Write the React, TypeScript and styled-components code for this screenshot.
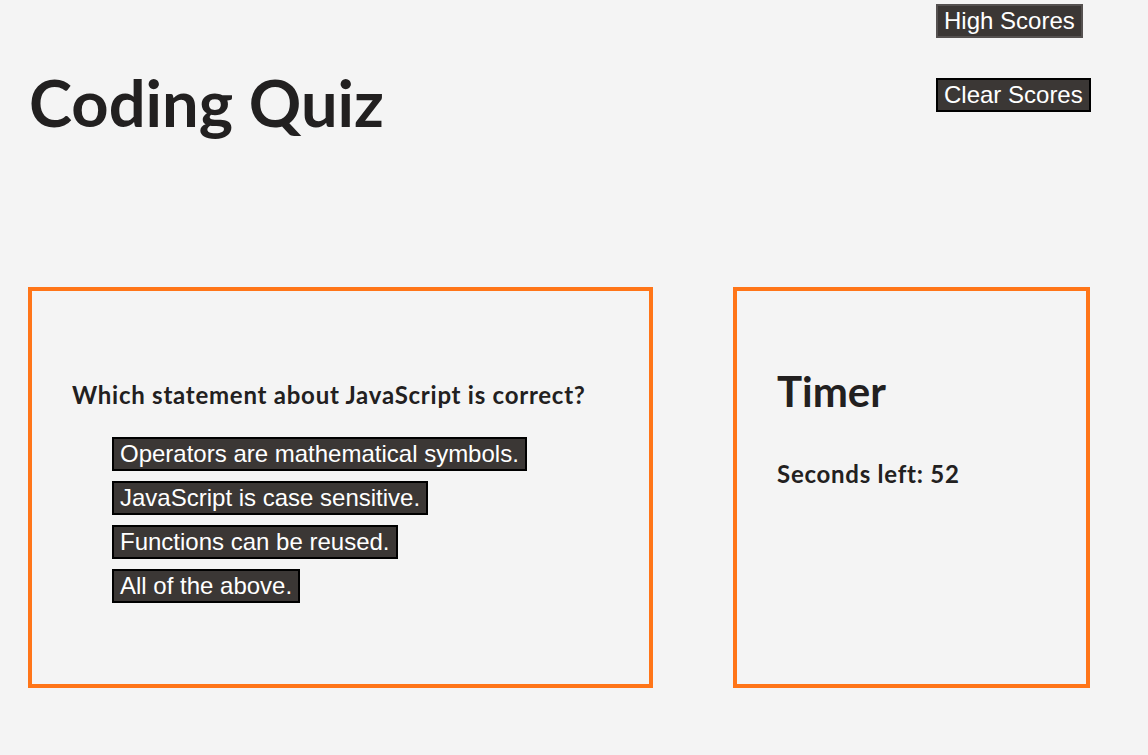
import styled, { createGlobalStyle } from "styled-components";

const GlobalStyle = createGlobalStyle`
  body {
    margin: 0;
    background-color: #f4f4f4;
    color: #222020;
    font-family: "Lato", "Open Sans", sans-serif;
  }
`;

const Page = styled.div`
  width: 1148px;
  height: 755px;
  box-sizing: border-box;
  padding: 0 58px 0 28px;
  display: flex;
  flex-direction: column;
`;

const Header = styled.header`
  display: flex;
  justify-content: space-between;
  align-items: flex-start;
  height: 287px;
`;

const Title = styled.h1`
  margin: 70px 0 0 1px;
  font-size: 65px;
  font-weight: 700;
  line-height: 1;
`;

const Nav = styled.nav`
  width: 154px;
  display: flex;
  flex-direction: column;
  align-items: flex-start;
  gap: 40px;
  padding-top: 4px;
`;

const DarkButton = styled.button<{ $strong?: boolean }>`
  font-family: "Liberation Sans", Arial, sans-serif;
  font-size: 24px;
  line-height: 26px;
  white-space: nowrap;
  color: #ffffff;
  background-color: #3b3735;
  border: 2px solid ${(props) => (props.$strong ? "#000000" : "#555150")};
  padding: 2px 6px;
  cursor: pointer;
`;

const Row = styled.main`
  display: flex;
  gap: 80px;
`;

const Card = styled.section<{ $width: number }>`
  width: ${(props) => props.$width}px;
  height: 401px;
  box-sizing: border-box;
  border: 4px solid #ff7518;
`;

const QuestionBody = styled.div`
  padding: 90px 0 0 40px;
`;

const Question = styled.h3`
  margin: 0 0 28px;
  font-size: 24px;
  font-weight: 700;
  line-height: 28px;
  letter-spacing: 0.75px;
`;

const Answers = styled.div`
  display: flex;
  flex-direction: column;
  align-items: flex-start;
  gap: 10px;
  padding-left: 40px;
`;

const TimerBody = styled.div`
  padding: 75px 0 0 40px;
`;

const TimerTitle = styled.h2`
  margin: 0 0 44px;
  font-size: 42px;
  font-weight: 700;
  line-height: 50px;
`;

const Seconds = styled.p`
  margin: 0;
  font-size: 24px;
  font-weight: 700;
  line-height: 28px;
  letter-spacing: 0.75px;
`;

const answers = [
  "Operators are mathematical symbols.",
  "JavaScript is case sensitive.",
  "Functions can be reused.",
  "All of the above.",
];

export default function App() {
  return (
    <>
      <GlobalStyle />
      <Page>
        <Header>
          <Title>Coding Quiz</Title>
          <Nav>
            <DarkButton>High Scores</DarkButton>
            <DarkButton $strong>Clear Scores</DarkButton>
          </Nav>
        </Header>
        <Row>
          <Card $width={625}>
            <QuestionBody>
              <Question>Which statement about JavaScript is correct?</Question>
              <Answers>
                {answers.map((a) => (
                  <DarkButton key={a} $strong>
                    {a}
                  </DarkButton>
                ))}
              </Answers>
            </QuestionBody>
          </Card>
          <Card $width={357}>
            <TimerBody>
              <TimerTitle>Timer</TimerTitle>
              <Seconds>Seconds left: 52</Seconds>
            </TimerBody>
          </Card>
        </Row>
      </Page>
    </>
  );
}
